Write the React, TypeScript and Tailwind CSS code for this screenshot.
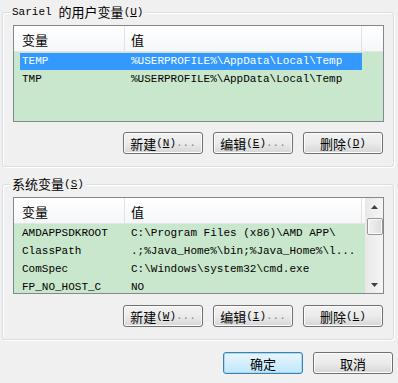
import type { ReactNode } from 'react';

// Windows 7 environment variables dialog

const cjk = "font-['Noto_Sans_CJK_SC',sans-serif] text-[13px]";
const mono = "font-['Liberation_Mono','Noto_Sans_CJK_SC',monospace] text-[11px]";

function Hotkey({ k }: { k: string }) {
  return (
    <span className={mono}>
      (<span className="underline underline-offset-1">{k}</span>)
    </span>
  );
}

interface BtnProps {
  label: string;
  hotkey?: string;
  dots?: boolean;
  primary?: boolean;
}

function Btn({ label, hotkey, dots, primary }: BtnProps) {
  return (
    <button
      className={
        'flex h-[22px] w-[80px] items-center justify-center rounded-[3px] border text-black ' +
        (primary
          ? 'border-[#3c7fb1] bg-gradient-to-b from-[#eaf6fd] to-[#bee6fd] shadow-[inset_0_0_0_1px_#a7d9f5]'
          : 'border-[#707070] bg-gradient-to-b from-[#f2f2f2] via-[#ebebeb] to-[#d6d6d6] shadow-[inset_0_0_0_1px_#fcfcfc]')
      }
    >
      <span className={cjk + ' leading-none'}>{label}</span>
      {hotkey && <Hotkey k={hotkey} />}
      {dots && <span className={mono + ' text-[#888]'}>...</span>}
    </button>
  );
}

function GroupBox({ title, children }: { title: ReactNode; children: ReactNode }) {
  return (
    <div className="relative w-[392px] rounded-[3px] border border-[#d5dfe5] px-[10px] pt-[12px] pb-[12px] shadow-[inset_1px_1px_0_#fff,1px_1px_0_#fff]">
      <div className="absolute -top-[10px] left-[7px] flex h-[18px] items-center bg-[#f0f0f0] px-[2px]">
        {title}
      </div>
      {children}
    </div>
  );
}

interface Row {
  name: string;
  value: string;
  selected?: boolean;
}

function ListView({ rows, scroll }: { rows: Row[]; scroll?: boolean }) {
  return (
    <div className="flex h-[97px] w-[371px] overflow-hidden border border-[#828790] bg-[#c9e7cc]">
      <div className="flex min-w-0 flex-1 flex-col">
        <div className="flex h-[26px] shrink-0 border-b border-[#e5e5e5] bg-gradient-to-b from-white to-[#f6f7f9]">
          <div className="flex w-[111px] items-center border-r border-[#e2e2e2] pl-[8px] pt-[2px]">
            <span className={cjk}>变量</span>
          </div>
          <div className="flex w-[237px] items-center border-r border-[#e2e2e2] pl-[6px] pt-[2px]">
            <span className={cjk}>值</span>
          </div>
          <div className="flex-1" />
        </div>
        <div className="flex flex-col">
          {rows.map((r) => (
            <div key={r.name} className="flex h-[18px] items-center pl-[6px]">
              <div
                className={
                  'flex h-[17px] w-[342px] items-center whitespace-nowrap ' +
                  mono +
                  (r.selected ? ' bg-[#3399ff] text-white' : ' text-black')
                }
              >
                <span className="w-[105px] pl-[2px]">{r.name}</span>
                <span className="pl-[6px]">{r.value}</span>
              </div>
            </div>
          ))}
        </div>
      </div>
      {scroll && (
        <div className="flex w-[18px] shrink-0 flex-col items-center border-l border-[#e8e8e8] bg-gradient-to-r from-[#e9e9e9] to-[#f5f5f5]">
          <div className="flex h-[17px] w-full items-center justify-center">
            <svg width="7" height="4" viewBox="0 0 7 4">
              <path d="M3.5 0L7 4H0z" fill="#404040" />
            </svg>
          </div>
          <div className="mt-[3px] h-[17px] w-[16px] rounded-[2px] border border-[#979797] bg-gradient-to-r from-[#f2f2f2] to-[#dcdcdc] shadow-[inset_0_0_0_1px_#fafafa]" />
          <div className="flex-1" />
          <div className="flex h-[17px] w-full items-center justify-center">
            <svg width="7" height="4" viewBox="0 0 7 4">
              <path d="M0 0H7L3.5 4z" fill="#404040" />
            </svg>
          </div>
        </div>
      )}
    </div>
  );
}

const userRows: Row[] = [
  { name: 'TEMP', value: '%USERPROFILE%\\AppData\\Local\\Temp', selected: true },
  { name: 'TMP', value: '%USERPROFILE%\\AppData\\Local\\Temp' },
];

const sysRows: Row[] = [
  { name: 'AMDAPPSDKROOT', value: 'C:\\Program Files (x86)\\AMD APP\\' },
  { name: 'ClassPath', value: '.;%Java_Home%\\bin;%Java_Home%\\l...' },
  { name: 'ComSpec', value: 'C:\\Windows\\system32\\cmd.exe' },
  { name: 'FP_NO_HOST_C', value: 'NO' },
];

export default function App() {
  return (
    <div className="h-[383px] w-[398px] overflow-hidden bg-[#f0f0f0] pt-[12px] pl-[2px] pr-[5px] text-black">
      <GroupBox
        title={
          <>
            <span className={mono}>Sariel</span>
            <span className={cjk + ' ml-[7px]'}>的用户变量</span>
            <Hotkey k="U" />
          </>
        }
      >
        <ListView rows={userRows} />
        <div className="mt-[10px] flex justify-end gap-[10px]">
          <Btn label="新建" hotkey="N" dots />
          <Btn label="编辑" hotkey="E" dots />
          <Btn label="删除" hotkey="D" />
        </div>
      </GroupBox>

      <div className="mt-[17px]">
        <GroupBox
          title={
            <>
              <span className={cjk}>系统变量</span>
              <Hotkey k="S" />
            </>
          }
        >
          <ListView rows={sysRows} scroll />
          <div className="mt-[11px] flex justify-end gap-[10px]">
            <Btn label="新建" hotkey="W" dots />
            <Btn label="编辑" hotkey="I" dots />
            <Btn label="删除" hotkey="L" />
          </div>
        </GroupBox>
      </div>

      <div className="mt-[12px] flex justify-end gap-[10px]">
        <Btn label="确定" primary />
        <Btn label="取消" />
      </div>
    </div>
  );
}
